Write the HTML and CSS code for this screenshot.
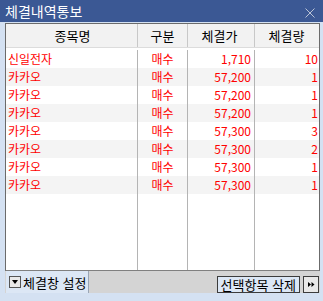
FILE: index.html
```html
<!DOCTYPE html>
<html lang="ko">

<head>
    <meta charset="UTF-8" />
    <title>체결내역통보</title>
    <link rel="stylesheet" href="styles.css">
</head>

<body>
    <div id="window">
        <div class="titlebar">
            <span class="title">체결내역통보</span>
            <svg class="close" width="10" height="10" viewBox="0 0 10 10">
                <path d="M0.5 0.5 L9.5 9.5 M9.5 0.5 L0.5 9.5" stroke="#b9c3d6" stroke-width="1" />
            </svg>
        </div>

        <div class="frame">
            <div class="grid">
                <div class="row head">
                    <div class="cell c1">종목명</div>
                    <div class="cell c2">구분</div>
                    <div class="cell c3">체결가</div>
                    <div class="cell c4">체결량</div>
                </div>
                <div class="body">
                    <div class="row">
                        <div class="cell c1">신일전자</div>
                        <div class="cell c2">매수</div>
                        <div class="cell c3">1,710</div>
                        <div class="cell c4">10</div>
                    </div>
                    <div class="row alt">
                        <div class="cell c1">카카오</div>
                        <div class="cell c2">매수</div>
                        <div class="cell c3">57,200</div>
                        <div class="cell c4">1</div>
                    </div>
                    <div class="row">
                        <div class="cell c1">카카오</div>
                        <div class="cell c2">매수</div>
                        <div class="cell c3">57,200</div>
                        <div class="cell c4">1</div>
                    </div>
                    <div class="row alt">
                        <div class="cell c1">카카오</div>
                        <div class="cell c2">매수</div>
                        <div class="cell c3">57,200</div>
                        <div class="cell c4">1</div>
                    </div>
                    <div class="row">
                        <div class="cell c1">카카오</div>
                        <div class="cell c2">매수</div>
                        <div class="cell c3">57,300</div>
                        <div class="cell c4">3</div>
                    </div>
                    <div class="row alt">
                        <div class="cell c1">카카오</div>
                        <div class="cell c2">매수</div>
                        <div class="cell c3">57,300</div>
                        <div class="cell c4">2</div>
                    </div>
                    <div class="row">
                        <div class="cell c1">카카오</div>
                        <div class="cell c2">매수</div>
                        <div class="cell c3">57,300</div>
                        <div class="cell c4">1</div>
                    </div>
                    <div class="row alt">
                        <div class="cell c1">카카오</div>
                        <div class="cell c2">매수</div>
                        <div class="cell c3">57,300</div>
                        <div class="cell c4">1</div>
                    </div>
                    <div class="row filler">
                        <div class="cell c1"></div>
                        <div class="cell c2"></div>
                        <div class="cell c3"></div>
                        <div class="cell c4"></div>
                    </div>
                </div>
            </div>

            <div class="bottombar">
                <div class="tab">
                    <span class="dropbtn"><span class="tri"></span></span>
                    체결창 설정
                </div>
                <div class="spacer"></div>
                <button class="delete">선택항목 삭제</button>
                <button class="more">
                    <svg width="7" height="5" viewBox="0 0 7 5">
                        <path d="M0 0 L3 2.5 L0 5 Z M3.5 0 L6.5 2.5 L3.5 5 Z" fill="#000" />
                    </svg>
                </button>
            </div>
        </div>
    </div>
</body>

</html>
```

FILE: styles.css
```css
* {
    box-sizing: border-box;
    margin: 0;
    padding: 0;
}

body {
    font-family: "Noto Sans CJK KR", "Liberation Sans", sans-serif;
    background-color: #d4e1f2;
    width: 323px;
    height: 301px;
    overflow: hidden;
}

#window {
    display: flex;
    flex-direction: column;
    height: 301px;
}

.titlebar {
    height: 22px;
    background-color: #3b5894;
    color: #ffffff;
    display: flex;
    align-items: center;
    justify-content: space-between;
    padding: 0 8px 0 5px;
}

.title {
    font-size: 14px;
    line-height: 22px;
}

.close {
    margin-top: 3px;
}

.frame {
    flex: 1;
    display: flex;
    flex-direction: column;
    padding: 1px 3px 8px 5px;
}

.grid {
    flex: 1;
    display: flex;
    flex-direction: column;
    background-color: #ffffff;
    border: 1px solid #6b6b6b;
    border-bottom-color: #808080;
}

.row {
    display: flex;
    height: 18px;
    font-size: 12px;
    line-height: 18px;
    color: #ff0000;
}

.row.alt {
    background-color: #f4f4f4;
}

.row.head {
    height: 24px;
    line-height: 23px;
    font-size: 13px;
    color: #000000;
    background-color: #f2f2f2;
    border-bottom: 1px solid #dcdcdc;
}

.body {
    flex: 1;
    display: flex;
    flex-direction: column;
    padding-top: 2px;
}

.row.filler {
    flex: 1;
}

.cell {
    border-right: 1px solid #b4b4b4;
    white-space: nowrap;
    overflow: hidden;
}

.head .cell {
    text-align: center;
    border-right-color: #c8c8c8;
}

.c1 {
    width: 132px;
    padding-left: 2px;
}

.c2 {
    width: 50px;
    text-align: center;
}

.c3 {
    width: 67px;
    text-align: right;
    padding-right: 3px;
}

.c4 {
    width: 64px;
    text-align: right;
    padding-right: 1px;
    border-right: none;
}

.bottombar {
    height: 22px;
    display: flex;
    align-items: stretch;
    background-color: #d4d4d4;
    border-left: 1px solid #d4d4d4;
}

.tab {
    width: 83px;
    display: flex;
    align-items: center;
    gap: 2px;
    padding-left: 3px;
    font-size: 13px;
    background-color: #dce7f5;
    border-right: 1px solid #9aa6b6;
}

.dropbtn {
    width: 12px;
    height: 12px;
    border: 1px solid #555555;
    background-color: #e8e8e8;
    display: flex;
    align-items: center;
    justify-content: center;
}

.tri {
    width: 0;
    height: 0;
    border-left: 3px solid transparent;
    border-right: 3px solid transparent;
    border-top: 4px solid #000000;
}

.spacer {
    flex: 1;
}

button {
    font-family: inherit;
    cursor: pointer;
}

.delete {
    margin: 5px 3px 0 0;
    height: 17px;
    padding: 0 3px;
    font-size: 13px;
    line-height: 15px;
    background-color: #dce7f5;
    border: 1px solid #3c3c3c;
    color: #000000;
}

.more {
    margin: 5px 1px 0 0;
    width: 16px;
    height: 17px;
    background-color: #e8e8e8;
    border: 1px solid #3c3c3c;
    display: flex;
    align-items: center;
    justify-content: center;
}
```
